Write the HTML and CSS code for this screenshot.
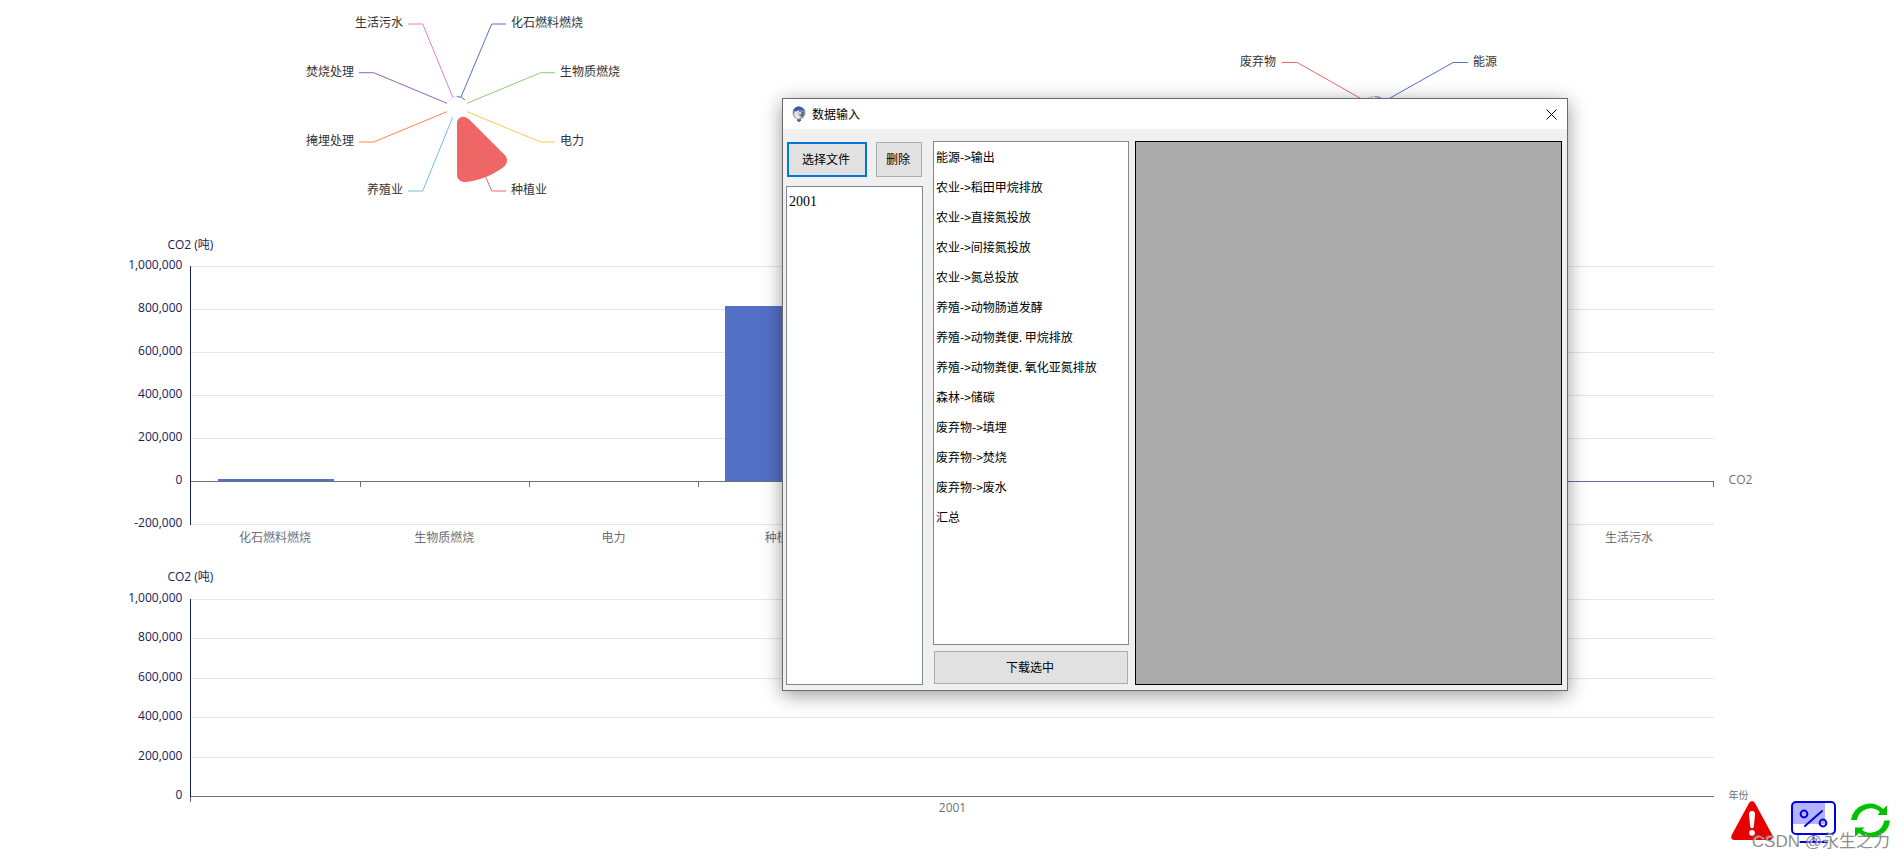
FILE: index.html
```
<!DOCTYPE html>
<html lang="zh-CN">
<head>
<meta charset="utf-8">
<title>数据输入</title>
<link rel="stylesheet" href="styles.css">
</head>
<body>
<main class="dashboard">
  <section class="pies">
    <svg class="pie pie-sources" width="360" height="210" viewBox="0 0 360 210" role="img" aria-label="排放来源">
      <g class="leader">
        <path stroke="#ea7ccc" d="M131 24H145.7L175.7 97"/>
        <path stroke="#5470c6" d="M229 24H214.7L184 97"/>
        <path stroke="#9a60b4" d="M82 72.7H96.7L170 103.3"/>
        <path stroke="#91cc75" d="M278 72.7H263.7L190 103.3"/>
        <path stroke="#fc8452" d="M82 142H96.7L170 111.7"/>
        <path stroke="#fac858" d="M278 142H263.7L190 111.7"/>
        <path stroke="#73c0de" d="M131 191H145.7L175.7 117.3"/>
        <path stroke="#ee6666" d="M229 191H214.7L207 173"/>
        <path stroke="#5470c6" d="M180 96.5Q185 96.5 188 100"/>
        <path stroke="#ea7ccc" opacity=".3" d="M180 96.5Q175 96.5 171 101"/>
      </g>
      <path fill="#ee6666" d="M180 123.5C180 116.5 187.5 114.5 192 119.3L228 155.3C231.3 159 230.5 164 226.5 167C217 174.5 203 180.5 189.5 182C184 182.5 180 179.5 180 174.5Z"/>
      <g class="pie-label">
        <text x="126" y="27" text-anchor="end">生活污水</text>
        <text x="234" y="27">化石燃料燃烧</text>
        <text x="77" y="76" text-anchor="end">焚烧处理</text>
        <text x="283" y="76">生物质燃烧</text>
        <text x="77" y="145" text-anchor="end">掩埋处理</text>
        <text x="283" y="145">电力</text>
        <text x="126" y="194" text-anchor="end">养殖业</text>
        <text x="234" y="194">种植业</text>
      </g>
    </svg>
    <svg class="pie pie-sectors" width="280" height="210" viewBox="0 0 280 210" role="img" aria-label="排放部门">
      <g class="leader">
        <path stroke="#ee6666" d="M47 62.5H62.3L131 101.5"/>
        <path stroke="#5470c6" d="M233 62.5H218L149 101.5"/>
        <path stroke="#ee6666" opacity=".5" d="M132 99Q135 96.5 139 96.5"/>
        <path stroke="#5470c6" d="M140 96.5Q145 96.5 149 100"/>
      </g>
      <g class="pie-label">
        <text x="41" y="66" text-anchor="end">废弃物</text>
        <text x="238" y="66">能源</text>
      </g>
    </svg>
  </section>

  <section class="chart chart-category">
    <h2 class="axis-name">CO2 (吨)</h2>
    <div class="plot">
      <div class="band"><span class="tick-label">1,000,000</span></div>
      <div class="band"><span class="tick-label">800,000</span></div>
      <div class="band"><span class="tick-label">600,000</span></div>
      <div class="band"><span class="tick-label">400,000</span></div>
      <div class="band"><span class="tick-label">200,000</span></div>
      <div class="band zero"><span class="tick-label">0</span><span class="axis-end">CO2</span></div>
      <div class="band last"><span class="tick-label">-200,000</span></div>
      <div class="bars">
        <div class="slot"><div class="bar" style="height:1%"></div></div>
        <div class="slot"></div>
        <div class="slot"></div>
        <div class="slot"><div class="bar" style="height:81.6%"></div></div>
        <div class="slot"></div>
        <div class="slot"></div>
        <div class="slot"></div>
        <div class="slot"></div>
        <div class="slot"><div class="bar trace"></div></div>
      </div>
    </div>
    <div class="categories">
      <span>化石燃料燃烧</span><span>生物质燃烧</span><span>电力</span><span>种植业</span><span>养殖业</span><span>森林</span><span>掩埋处理</span><span>焚烧处理</span><span>生活污水</span>
    </div>
  </section>

  <section class="chart chart-year">
    <h2 class="axis-name">CO2 (吨)</h2>
    <div class="plot">
      <div class="band"><span class="tick-label">1,000,000</span></div>
      <div class="band"><span class="tick-label">800,000</span></div>
      <div class="band"><span class="tick-label">600,000</span></div>
      <div class="band"><span class="tick-label">400,000</span></div>
      <div class="band"><span class="tick-label">200,000</span></div>
      <div class="band zero last"><span class="tick-label">0</span><span class="axis-end small">年份</span></div>
    </div>
    <div class="categories"><span>2001</span></div>
  </section>
</main>

<nav class="tools">
  <button class="tool" type="button" aria-label="警告">
    <svg width="42" height="40" viewBox="0 0 42 40"><path fill="#e60000" d="M18.2 1.8Q21-1.8 23.8 1.8L41.3 34Q43 38.6 38.5 39H3.5Q-1 38.6.7 34Z"/><path fill="#fff" d="M18 13Q18 10 21 10T24 13L22.8 26Q21 28.5 19.2 26Z"/><circle cx="21" cy="31.8" r="2.9" fill="#fff"/></svg>
  </button>
  <button class="tool" type="button" aria-label="比例">
    <svg width="45" height="42" viewBox="0 0 45 42" fill="none" stroke="#0000e6" stroke-width="2"><path fill="#b3b3ff" stroke="none" d="M2 2H34V23H2Z"/><rect x="1" y="1" width="43" height="32" rx="4"/><circle cx="13" cy="13" r="3.4"/><circle cx="32" cy="22" r="3.4"/><path stroke-linecap="round" d="M14 25 31 10M22.500 34V40M9 41H36"/></svg>
  </button>
  <button class="tool" type="button" aria-label="刷新">
    <svg width="39" height="39" viewBox="0 0 39 39"><g fill="#00c000"><path d="M0 19A19 19 0 0 1 32 8L36 4.500V14H26.500L29 11A14 14 0 0 0 5.800 19Z"/><path d="M39 19.500A19 19 0 0 1 8 32L4 36V26.500H13.500L11 29A14 14 0 0 0 33.200 19.500Z"/></g></svg>
  </button>
</nav>
<p class="watermark">CSDN @永生之力</p>

<section class="window" role="dialog" aria-labelledby="window-title">
  <header class="titlebar">
    <svg class="app-icon" width="14" height="16" viewBox="0 0 14 16"><path fill="#5c6674" d="M5 13h4v2H8v1H6v-1H5z"/><circle cx="7" cy="7" r="6.500" fill="#8c9cae"/><path fill="#3d57a0" d="M1 5Q3 0 7 .5T13 5L9 4 5 5Z"/><path fill="#e2e8ee" d="M3 6 7 4 6 8 9 12 5 13 2 9Z"/><path fill="#53677a" d="M7 5 12 6 11 11 8 9Z"/><circle cx="8" cy="7" r="1.500" fill="#d7dfac"/></svg>
    <h1 class="window-title" id="window-title">数据输入</h1>
    <button class="close" type="button" aria-label="关闭"><svg width="11" height="11" viewBox="0 0 11 11"><path stroke="#000" d="M.5.5 10.500 10.500M10.500.5.5 10.500"/></svg></button>
  </header>
  <div class="window-body">
    <div class="files">
      <div class="file-actions">
        <button class="button focused" type="button">选择文件</button>
        <button class="button remove" type="button">删除</button>
      </div>
      <ul class="listbox years"><li>2001</li></ul>
    </div>
    <div class="sheets">
      <ul class="listbox">
        <li>能源-&gt;输出</li>
        <li>农业-&gt;稻田甲烷排放</li>
        <li>农业-&gt;直接氮投放</li>
        <li>农业-&gt;间接氮投放</li>
        <li>农业-&gt;氮总投放</li>
        <li>养殖-&gt;动物肠道发酵</li>
        <li>养殖-&gt;动物粪便. 甲烷排放</li>
        <li>养殖-&gt;动物粪便. 氧化亚氮排放</li>
        <li>森林-&gt;储碳</li>
        <li>废弃物-&gt;填埋</li>
        <li>废弃物-&gt;焚烧</li>
        <li>废弃物-&gt;废水</li>
        <li>汇总</li>
      </ul>
      <button class="button download" type="button">下载选中</button>
    </div>
    <div class="grid-view"></div>
  </div>
</section>
</body>
</html>
```
FILE: styles.css
```
* { box-sizing: border-box; }
body {
  position: relative;
  min-height: 100vh;
  margin: 0;
  overflow: hidden;
  background: #fff;
  color: #333;
  font: 12px/16px "Open Sans", "Noto Sans CJK SC", sans-serif;
}
h1, h2, p, ul { margin: 0; padding: 0; font-size: 12px; font-weight: 400; list-style: none; }
svg { display: block; }
button { padding: 0; font: inherit; color: inherit; }

/* Pie row */
.pies {
  display: grid;
  grid-template-columns: 480fr 484fr 36fr;
  justify-items: center;
  height: 237px;
}
.leader { fill: none; stroke-width: 1; }
.pie-label { fill: #333; }

/* Cartesian charts */
.chart { padding: 0 10%; }
.chart-year { margin-top: 23px; }
.axis-name {
  width: 96px;
  margin-left: -48px;
  text-align: center;
  color: #14215c;
}
.plot {
  position: relative;
  display: flex;
  flex-direction: column;
  height: 259px;
  margin-top: 13px;
  border-left: 1px solid #14215c;
}
.chart-year .plot { height: 198px; margin-top: 14px; }
.band {
  position: relative;
  flex: 1;
  border-top: 1px solid #e0e6f1;
}
.band.last { flex: none; height: 1px; }
.band.zero { border-color: #6e7079; }
.tick-label {
  position: absolute;
  top: -10px;
  right: 100%;
  margin-right: 9px;
  color: #14215c;
}
.axis-end {
  position: absolute;
  top: -10px;
  left: 100%;
  margin-left: 15px;
  color: #6e7079;
  white-space: nowrap;
}
.axis-end.small { font-size: 10px; }
.bars {
  position: absolute;
  inset: 0 0 43px;
  display: flex;
  border-bottom: 1px solid #6e7079;
}
.slot {
  position: relative;
  display: flex;
  flex: 1;
  align-items: flex-end;
  justify-content: center;
}
.slot::after {
  content: "";
  position: absolute;
  top: 100%;
  right: 0;
  width: 1px;
  height: 6px;
  background: #6e7079;
}
.bar { width: 69%; background: #5470c6; }
.bar.trace { height: 1px; margin-bottom: -1px; background: #5f70a0; }
.categories {
  display: flex;
  padding-top: 5px;
  color: #6e7079;
  text-align: center;
}
.categories span { flex: 1; }
.chart-year .categories { padding-top: 3px; }
.chart-year .categories::before {
  content: "";
  width: 1px;
  height: 5px;
  margin-top: -3px;
  background: #6e7079;
}

/* Floating tools */
.tools {
  position: absolute;
  right: 14px;
  bottom: 18px;
  display: flex;
  align-items: flex-start;
  gap: 15px;
}
.tool { border: 0; background: none; }
.tool:first-child { margin-right: 3px; }
.watermark {
  position: absolute;
  right: 14px;
  bottom: 7px;
  color: rgba(120, 120, 120, .85);
  font: 17px/24px "Liberation Sans", "Noto Sans CJK SC", sans-serif;
  text-shadow: 1px 1px 0 rgba(255, 255, 255, .7);
}

/* Data entry window */
.window {
  position: absolute;
  top: 98px;
  left: 782px;
  display: flex;
  flex-direction: column;
  width: 786px;
  height: 593px;
  border: 1px solid #6b6b6b;
  background: #f0f0f0;
  box-shadow: 0 4px 18px rgba(0, 0, 0, .4);
  color: #000;
  font-family: "Noto Sans CJK SC", sans-serif;
}
.titlebar {
  display: flex;
  align-items: center;
  height: 30px;
  padding: 0 10px 0 9px;
  background: #fff;
}
.window-title { flex: 1; margin-left: 6px; }
.close { border: 0; background: none; }
.window-body {
  display: flex;
  flex: 1;
  padding: 12px 5px 5px 3px;
}
.files, .sheets { display: flex; flex-direction: column; }
.files { width: 137px; margin-right: 10px; }
.sheets { width: 196px; margin-right: 6px; }
.file-actions {
  display: flex;
  justify-content: space-between;
  margin: 1px 1px 9px;
}
.button {
  width: 46px;
  height: 35px;
  padding: 0 2px 2px 0;
  border: 1px solid #adadad;
  background: #e1e1e1;
}
.button.focused { width: 80px; border: 2px solid #0078d7; }
.button.download { width: auto; height: 33px; margin: 6px 1px 1px; }
.listbox {
  flex: 1;
  padding-left: 2px;
  border: 1px solid #828790;
  background: #fff;
  line-height: 30px;
}
.years li { font-family: "Liberation Serif", serif; font-size: 14px; }
.grid-view {
  flex: 1;
  border: 1px solid #000;
  background: #ababab;
}
```
